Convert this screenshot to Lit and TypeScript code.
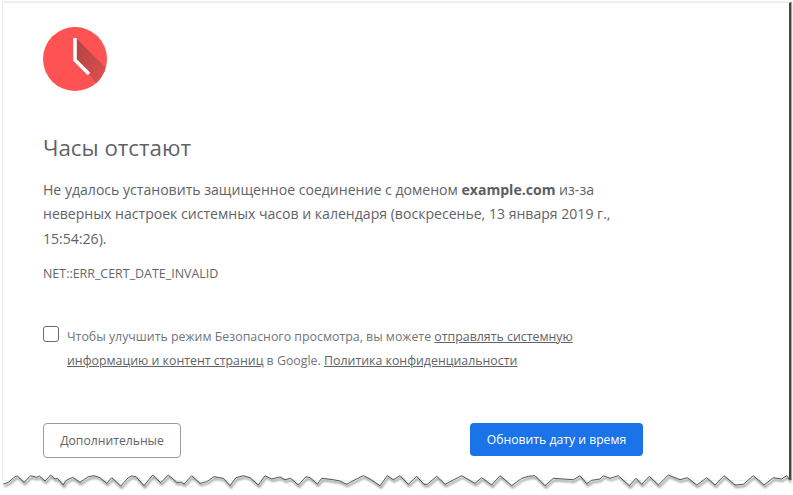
import { LitElement, html, css, svg } from "lit";
import { customElement } from "lit/decorators.js";

const crops: [number, number[][]][] = [
  [0, [[10,57],[25,52],[45,35],[52,33],[72,52],[92,32],[110,37],[118,33],[135,48],[152,30],[165,42],[172,40],[190,60],[197,47],[218,37],[240,52],[265,35],[282,32],[300,38],[320,55],[335,38],[362,63],[385,38],[395,33],[408,35],[432,62],[458,30],[482,53],[505,30],[530,52],[545,52],[552,57],[575,32]]],
  [200, [[0,55],[20,50],[42,35],[70,40],[90,62],[108,38],[130,32],[150,38],[175,60],[195,32],[215,42],[240,36],[255,44],[272,40],[295,60],[318,35],[330,38],[352,57],[365,40],[400,44],[420,48],[440,58],[465,44],[490,32],[510,42],[540,62],[562,32],[580,44]]],
  [400, [[0,32],[25,58],[50,34],[72,58],[82,58],[110,34],[135,58],[150,50],[185,32],[225,55],[245,38],[275,60],[300,32],[335,62],[365,40],[385,34],[405,32],[435,62],[460,40],[490,42],[520,44],[540,32],[560,56],[575,46]]],
  [600, [[0,42],[10,32],[30,40],[55,32],[88,62],[108,40],[125,58],[148,34],[175,60],[185,50],[205,30],[240,44],[262,38],[290,60],[320,38],[345,60],[372,32],[405,60],[430,58],[460,32],[492,60],[520,38],[545,42],[560,32],[570,46]]],
];
const tornPoints = crops
  .flatMap(([ox, pts]) => pts.map(([x, y]) => `${(ox + x / 3).toFixed(1)},${(465 + y / 3).toFixed(1)}`))
  .join(" ");

@customElement("app-root")
export class AppRoot extends LitElement {
  static styles = css`
    :host {
      display: block;
      position: relative;
      width: 793px;
      height: 495px;
      overflow: hidden;
      background: #fff;
      font-family: "Open Sans", "Noto Sans", sans-serif;
      color: #5f6368;
    }
    .frame {
      box-sizing: border-box;
      margin: 2px 2px 0 2px;
      height: 478px;
      border-top: 1px solid #ececec;
      border-left: 1px solid #ececec;
      border-right: 2px solid #444;
      padding: 24px 0 0 40px;
      box-shadow: 1px 0 1px #aaa;
    }
    .clock { display: block; width: 64px; height: 64px; }
    h1 {
      margin: 42px 0 0;
      font-size: 22.3px;
      font-weight: 400;
      line-height: 30px;
      color: #5f6368;
    }
    .msg {
      margin: 15px 0 0;
      font-size: 14.07px;
      line-height: 24.4px;
      color: #5f6368;
      white-space: nowrap;
    }
    .msg b { font-weight: 700; color: #5a5e62; }
    .code {
      margin: 14.3px 0 0;
      font-size: 12.45px;
      line-height: 16px;
      color: #63676b;
    }
    .opt {
      display: flex;
      align-items: flex-start;
      gap: 8px;
      margin-top: 43px;
    }
    .box {
      box-sizing: border-box;
      flex: none;
      width: 16px;
      height: 16px;
      margin-top: 1px;
      border: 1.5px solid #6a6a6a;
      border-radius: 3px;
    }
    .opt p {
      margin: 0;
      font-size: 12.36px;
      line-height: 24px;
      color: #70757a;
      white-space: nowrap;
    }
    .opt a { color: #5f6368; text-decoration: underline; }
    .actions {
      display: flex;
      justify-content: space-between;
      align-items: flex-start;
      width: 600px;
      margin-top: 50px;
    }
    .btn {
      box-sizing: border-box;
      font: inherit;
      font-size: 12.2px;
      border-radius: 4px;
      padding: 0;
      display: flex;
      align-items: center;
      justify-content: center;
    }
    .sec { width: 138px; height: 35px; background: #fff; border: 1px solid #9a9a9a; color: #5f6368; }
    .pri { width: 173px; height: 33px; background: #1a73e8; border: none; color: #fff; }
    .torn { position: absolute; left: 0; top: 0; pointer-events: none; }
  `;

  render() {
    return html`
      <div class="frame">
        <svg class="clock" viewBox="0 0 64 64">
          <defs>
            <clipPath id="c"><circle cx="32" cy="32" r="32"></circle></clipPath>
            <linearGradient id="s" x1="0.1" y1="0.1" x2="0.9" y2="0.7">
              <stop offset="0" stop-color="#b64545"></stop>
              <stop offset="1" stop-color="#e65050"></stop>
            </linearGradient>
          </defs>
          <circle cx="32" cy="32" r="32" fill="#ff5252"></circle>
          <polygon clip-path="url(#c)" points="33,11 72,50 72,72 66,72 46,47 33,33" fill="url(#s)"></polygon>
          <polyline points="32,11 32,33 46,47" fill="none" stroke="#fff" stroke-width="3.6"></polyline>
        </svg>
        <h1>Часы отстают</h1>
        <p class="msg">
          Не удалось установить защищенное соединение с доменом <b>example.com</b> из-за<br />
          неверных настроек системных часов и календаря (воскресенье, 13 января 2019 г.,<br />
          15:54:26).
        </p>
        <div class="code">NET::ERR_CERT_DATE_INVALID</div>
        <div class="opt">
          <span class="box"></span>
          <p>
            Чтобы улучшить режим Безопасного просмотра, вы можете <a>отправлять системную</a><br />
            <a>информацию и контент страниц</a> в Google. <a>Политика конфиденциальности</a>
          </p>
        </div>
        <div class="actions">
          <button class="btn sec">Дополнительные</button>
          <button class="btn pri">Обновить дату и время</button>
        </div>
      </div>
      <svg class="torn" width="793" height="495" viewBox="0 0 793 495">
        <defs>
          <filter id="b" x="-2%" y="-50%" width="104%" height="200%"><feGaussianBlur stdDeviation="1"></feGaussianBlur></filter>
        </defs>
        <polygon points="${tornPoints} 793,481 793,495 0,495 0,484" fill="#fff"></polygon>
        ${svg`<polyline points="${tornPoints}" transform="translate(1,2)" fill="none" stroke="#777" stroke-width="1.4" filter="url(#b)"></polyline>`}
        <polyline points="${tornPoints}" fill="none" stroke="#333" stroke-width="0.8"></polyline>
      </svg>
    `;
  }
}
